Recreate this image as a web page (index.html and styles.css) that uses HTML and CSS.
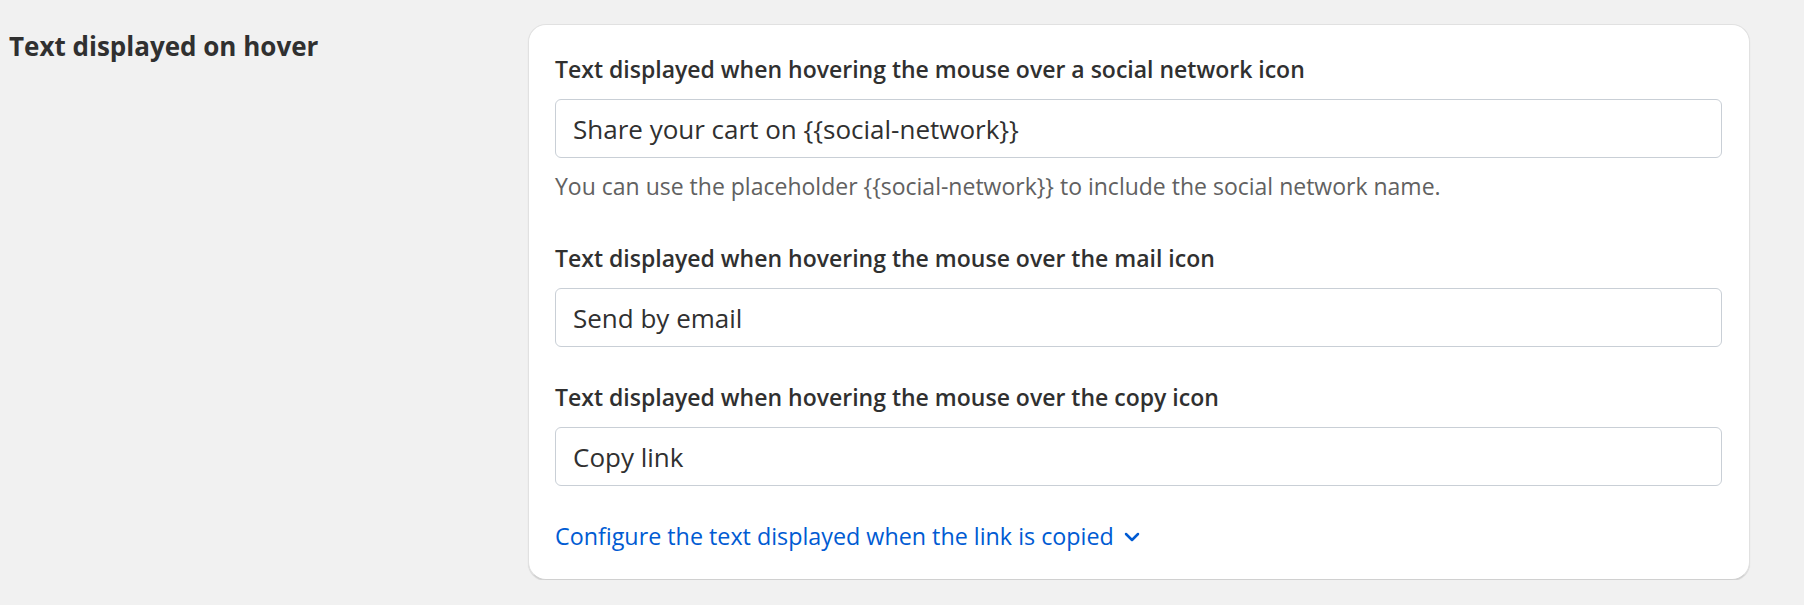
FILE: index.html
```html
<!DOCTYPE html>
<html lang="en">
<head>
<meta charset="utf-8">
<title>Text displayed on hover</title>
<link rel="stylesheet" href="styles.css">
</head>
<body>
<div class="section">
  <div class="section-title">Text displayed on hover</div>
  <div class="card">
    <div class="field">
      <label class="label" for="f1">Text displayed when hovering the mouse over a social network icon</label>
      <input class="input" id="f1" type="text" value="Share your cart on {{social-network}}">
      <div class="help">You can use the placeholder {{social-network}} to include the social network name.</div>
    </div>
    <div class="field">
      <label class="label" for="f2">Text displayed when hovering the mouse over the mail icon</label>
      <input class="input" id="f2" type="text" value="Send by email">
    </div>
    <div class="field">
      <label class="label" for="f3">Text displayed when hovering the mouse over the copy icon</label>
      <input class="input" id="f3" type="text" value="Copy link">
    </div>
    <a class="link" href="#">Configure the text displayed when the link is copied<svg class="chev" width="16" height="10" viewBox="0 0 16 10"><path d="M2 2 L8 8 L14 2" fill="none" stroke="currentColor" stroke-width="2.5" stroke-linecap="round" stroke-linejoin="round"/></svg></a>
  </div>
</div>
</body>
</html>
```
FILE: styles.css
```css
html, body {
  margin: 0;
  padding: 0;
  background: #f1f1f1;
}
body {
  font-family: "Open Sans", "Noto Sans", sans-serif;
  color: #303030;
}
.section {
  display: flex;
  align-items: flex-start;
  padding: 24px 0 0 9px;
}
.section-title {
  width: 519px;
  flex: none;
  font-size: 26px;
  font-weight: 700;
  line-height: 32px;
  margin-top: 6px;
  color: #303030;
}
.card {
  width: 1222px;
  box-sizing: border-box;
  background: #fff;
  border: 1px solid #e1e1e1;
  border-bottom-color: #d0d0d0;
  border-radius: 18px;
  box-shadow: 0 1px 1px rgba(0,0,0,0.12);
  padding: 30px 27px 29px 26px;
  display: flex;
  flex-direction: column;
  height: 556px;
}
.field {
  display: flex;
  flex-direction: column;
  margin-bottom: 36px;
}
.field:first-child {
  margin-bottom: 44px;
}
.label {
  font-size: 23px;
  font-weight: 600;
  line-height: 28px;
  margin-bottom: 16px;
}
.input {
  box-sizing: border-box;
  height: 59px;
  width: 100%;
  border: 1px solid #c9cfd6;
  border-radius: 6px;
  padding: 0 17px;
  font-family: inherit;
  font-size: 26px;
  color: #303030;
  background: #fff;
  outline: none;
}
.help {
  margin-top: 14px;
  font-size: 23px;
  line-height: 28px;
  color: #616161;
}
.link {
  color: #005bd3;
  text-decoration: none;
  font-size: 23.3px;
  line-height: 28px;
  display: flex;
  align-items: center;
  gap: 10px;
}
.chev {
  margin-top: 2px;
}
```
